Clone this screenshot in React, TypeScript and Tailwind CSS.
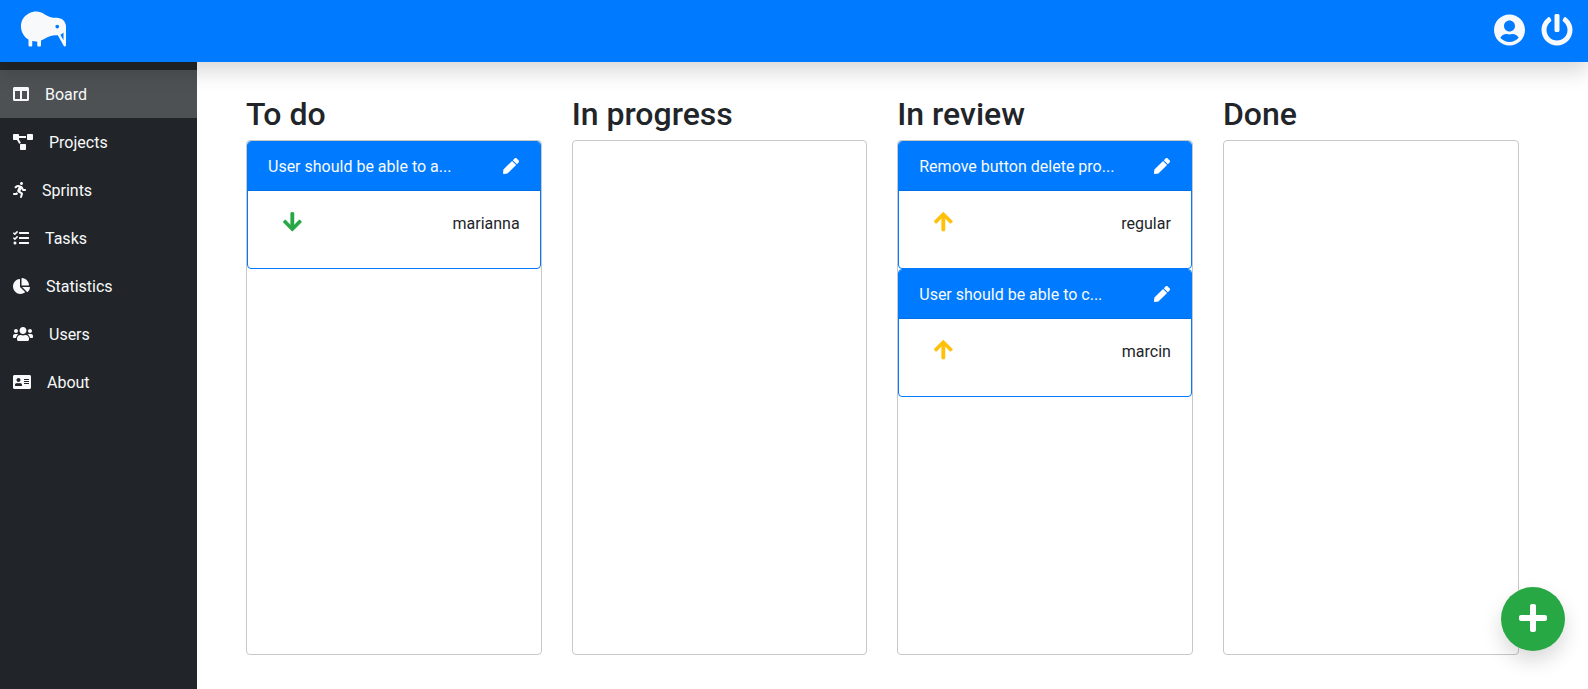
import React from "react";
import {
  FaKiwiBird,
  FaUserCircle,
  FaPowerOff,
  FaColumns,
  FaProjectDiagram,
  FaRunning,
  FaTasks,
  FaChartPie,
  FaUsers,
  FaAddressCard,
  FaPen,
  FaArrowDown,
  FaArrowUp,
  FaPlus,
} from "react-icons/fa";

type Task = { title: string; user: string; priority: "low" | "high" };

const navItems = [
  { label: "Board", Icon: FaColumns, width: "w-4", active: true },
  { label: "Projects", Icon: FaProjectDiagram, width: "w-5" },
  { label: "Sprints", Icon: FaRunning, width: "w-[13px]" },
  { label: "Tasks", Icon: FaTasks, width: "w-4" },
  { label: "Statistics", Icon: FaChartPie, width: "w-[17px]" },
  { label: "Users", Icon: FaUsers, width: "w-5" },
  { label: "About", Icon: FaAddressCard, width: "w-[18px]" },
];

const columns: { title: string; tasks: Task[] }[] = [
  {
    title: "To do",
    tasks: [{ title: "User should be able to a...", user: "marianna", priority: "low" }],
  },
  { title: "In progress", tasks: [] },
  {
    title: "In review",
    tasks: [
      { title: "Remove button delete pro...", user: "regular", priority: "high" },
      { title: "User should be able to c...", user: "marcin", priority: "high" },
    ],
  },
  { title: "Done", tasks: [] },
];

function TaskCard({ task }: { task: Task }) {
  return (
    <article className="h-32 overflow-hidden rounded border border-[#007bff] bg-white">
      <header className="flex h-[49px] items-center justify-between border-b border-[#0070e8] bg-[#007bff] pr-[21px] pl-5 text-[#f8f9fa]">
        <span className="pt-0.5">{task.title}</span>
        <FaPen className="h-4 w-4 text-white" />
      </header>
      <div className="flex items-start justify-between py-5 pr-5 pl-[35px]">
        {task.priority === "low" ? (
          <FaArrowDown className="h-[21.33px] w-[18.67px] stroke-current stroke-[12px] text-[#28a745]" />
        ) : (
          <FaArrowUp className="h-[21.33px] w-[18.67px] stroke-current stroke-[12px] text-[#ffc107]" />
        )}
        <span className="pt-px">{task.user}</span>
      </div>
    </article>
  );
}

export default function App() {
  return (
    <div className="flex h-[689px] flex-col overflow-hidden bg-white font-[Roboto,sans-serif] text-base text-[#212529]">
      <header className="z-10 flex h-[62px] shrink-0 items-center justify-between bg-[#007bff] pr-[15.5px] pb-1 pl-[21px] text-[#f8f9fa] shadow-[0_10px_20px_rgba(0,0,0,0.15)]">
        <FaKiwiBird className="h-10 w-[45px]" />
        <div className="flex items-center gap-4 pt-0.5">
          <FaUserCircle className="h-8 w-[31px]" />
          <FaPowerOff className="h-8 w-8" />
        </div>
      </header>
      <div className="flex min-h-0 flex-1">
        <nav className="w-[197px] shrink-0 bg-[#212529] pt-2 text-[#f8f9fa]">
          {navItems.map(({ label, Icon, width, active }) => (
            <a
              key={label}
              className={`flex h-12 items-center gap-4 pl-[13px] ${active ? "bg-[#4d5154]" : ""}`}
            >
              <Icon className={`h-4 ${width}`} />
              <span className="pt-0.5">{label}</span>
            </a>
          ))}
        </nav>
        <main className="grid flex-1 grid-cols-4 gap-[30px] pt-8 pr-[69.5px] pb-[34.4px] pl-[49px]">
          {columns.map((column) => (
            <section key={column.title} className="flex flex-col">
              <h2 className="mb-[7px] pt-px text-[32px] leading-[38.4px] font-medium">{column.title}</h2>
              <div className="flex-1 rounded border border-[#c8c8c8]">
                {column.tasks.map((task) => (
                  <TaskCard key={task.title} task={task} />
                ))}
              </div>
            </section>
          ))}
        </main>
      </div>
      <button className="fixed right-[23px] bottom-[38px] z-20 flex h-16 w-16 items-center justify-center rounded-full bg-[#28a745] pb-0.5 text-white shadow-[0_10px_20px_rgba(0,0,0,0.15)]">
        <FaPlus className="h-8 w-7" />
      </button>
    </div>
  );
}
